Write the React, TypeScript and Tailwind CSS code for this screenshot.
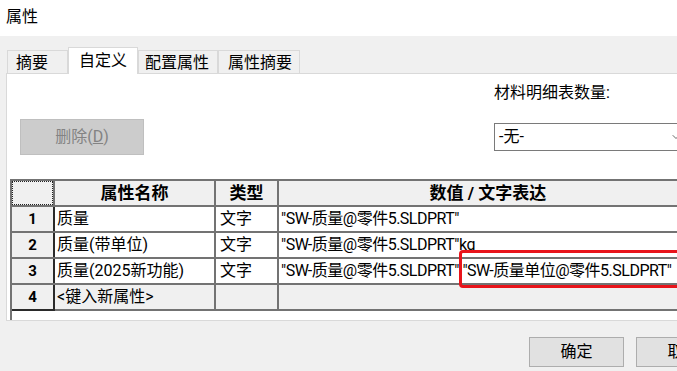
import React from 'react';
import { ChevronDown } from 'lucide-react';

type Row = { no: string; name: string; type: string; value: string; isNew?: boolean };

const rows: Row[] = [
  { no: '1', name: '质量', type: '文字', value: '"SW-质量@零件5.SLDPRT"' },
  { no: '2', name: '质量(带单位)', type: '文字', value: '"SW-质量@零件5.SLDPRT"kg' },
  { no: '3', name: '质量(2025新功能)', type: '文字', value: '"SW-质量@零件5.SLDPRT" "SW-质量单位@零件5.SLDPRT"' },
  { no: '4', name: '<键入新属性>', type: '', value: '', isNew: true },
];

const tabs = [
  { label: '摘要', w: 'w-[61px]', pl: 'pl-[8px]' },
  { label: '自定义', w: 'w-[70px]', pl: 'pl-[10px]', active: true },
  { label: '配置属性', w: 'w-[80px]', pl: 'pl-[6px]' },
  { label: '属性摘要', w: 'w-[82px]', pl: 'pl-[9px]' },
];

export default function App() {
  return (
    <div className="relative w-[677px] h-[371px] overflow-hidden bg-[#f0f0f0] text-[16px] text-black font-['Roboto','Noto_Sans_CJK_SC',sans-serif]">
      <div className="h-[36px] bg-white pl-[6px] pt-[5px] leading-[24px]">属性</div>

      <div className="pl-[6px] pt-[11px]">
        {/* tab strip */}
        <div className="flex items-end h-[26px] pl-[1px]">
          {tabs.map(t =>
            t.active ? (
              <div
                key={t.label}
                className={`relative z-10 -mb-px h-[27px] ${t.w} ${t.pl} border border-b-0 border-[#d9d9d9] bg-white leading-[25px]`}
              >
                {t.label}
              </div>
            ) : (
              <div
                key={t.label}
                className={`h-[23px] ${t.w} ${t.pl} border border-b-0 border-[#d9d9d9] bg-[#f0f0f0] leading-[23px]`}
              >
                {t.label}
              </div>
            )
          )}
        </div>

        {/* tab page */}
        <div className="w-[720px] h-[248px] border border-[#d9d9d9] bg-white">
          <div className="flex h-[105px]">
            <div className="w-[487px] pl-[13px] pt-[45px]">
              <button className="h-[36px] w-[124px] border border-[#bfbfbf] bg-[#cccccc] text-[#838383] leading-[34px]">
                删除(<span className="underline">D</span>)
              </button>
            </div>
            <div className="pt-[9px]">
              <div className="leading-[20px]">材料明细表数量:</div>
              <div className="mt-[20px] flex h-[28px] w-[192px] items-center justify-between border border-[#7a7a7a] bg-white pl-[4px] pr-[3px]">
                <span className="leading-[24px]">-无-</span>
                <ChevronDown size={12} strokeWidth={1.5} className="text-[#333]" />
              </div>
            </div>
          </div>

          {/* property grid */}
          <div className="ml-[3px] h-[141px] w-[693px] border-l-2 border-t-2 border-[#737373] bg-white">
            <div className="flex h-[26px] border-b-2 border-[#737373] bg-[#f0f0f0] text-[17px] font-bold leading-[24px]">
              <div className="w-[43px] border-r-2 border-[#737373]">
                <div className="h-full w-full border border-dotted border-[#222]" />
              </div>
              <div className="w-[161px] border-r-2 border-[#737373] text-center">属性名称</div>
              <div className="w-[63px] border-r-2 border-[#737373] text-center">类型</div>
              <div className="w-[420px] border-r-2 border-[#737373] text-center">数值 / 文字表达</div>
            </div>

            {rows.map(r => (
              <div
                key={r.no}
                className={`flex h-[26px] border-b-2 border-[#737373] leading-[24px] ${r.isNew ? 'bg-[#f0f0f0]' : 'bg-white'}`}
              >
                <div
                  className={`w-[43px] border-r-2 border-[#2a2a2a] bg-[#f0f0f0] text-center text-[15px] font-bold ${r.isNew ? 'border-b-2 -mb-[2px]' : ''}`}
                >
                  {r.no}
                </div>
                <div className="w-[161px] border-r-2 border-[#737373] pl-[2px] whitespace-nowrap overflow-hidden">{r.name}</div>
                <div className="w-[63px] border-r-2 border-[#737373] pl-[4px]">{r.type}</div>
                <div className="w-[420px] border-r-2 border-[#737373] pl-[2px] tracking-[-0.5px] whitespace-nowrap overflow-hidden">{r.value}</div>
              </div>
            ))}
          </div>
        </div>
      </div>

      <div className="ml-[529px] mt-[16px] flex gap-[12px]">
        <button className="h-[30px] w-[95px] shrink-0 border border-[#adadad] bg-[#e1e1e1] leading-[28px]">确定</button>
        <button className="h-[30px] w-[95px] shrink-0 border border-[#adadad] bg-[#e1e1e1] leading-[28px]">取消</button>
      </div>

      {/* annotation */}
      <div className="absolute left-[459px] top-[250px] h-[38px] w-[240px] rounded-[4px] border-[3px] border-[#e8141b]" />
    </div>
  );
}
